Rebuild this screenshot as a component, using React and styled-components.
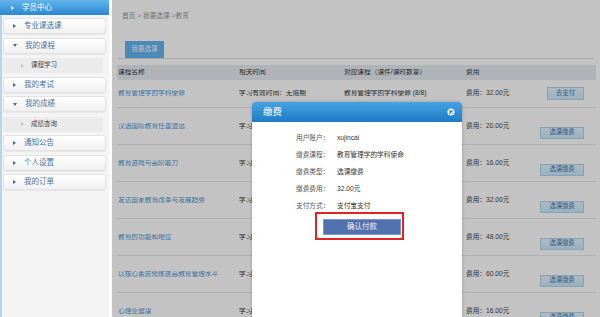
import React from 'react'
import styled, { createGlobalStyle } from 'styled-components'

const GlobalStyle = createGlobalStyle`
  html, body {
    margin: 0;
    padding: 0;
    background: #ffffff;
    font-family: "Liberation Sans", "Noto Sans CJK SC", sans-serif;
  }
  * {
    box-sizing: border-box;
  }
`

const Page = styled.div`
  display: flex;
  width: 600px;
  height: 317px;
  overflow: hidden;
`

const Sidebar = styled.div`
  width: 109px;
  flex-shrink: 0;
  display: flex;
  flex-direction: column;
  background: #f4f4f4;
`

const SideHeader = styled.div`
  height: 15px;
  display: flex;
  align-items: center;
  gap: 8px;
  padding-left: 11px;
  background: linear-gradient(#62b5ec, #2b87d2);
  color: #ffffff;
  font-size: 7.5px;
  line-height: 1;
`

const SideBody = styled.div`
  flex: 1;
  border-left: 2px solid #b5d5ee;
  padding: 3px 3px 0 1px;
`

const Arrow = styled.span`
  width: 0;
  height: 0;
  flex-shrink: 0;
  border-style: solid;
  ${p => p.$down
    ? `border-width: 3px 2.5px 0 2.5px; border-color: ${p.$color} transparent transparent transparent;`
    : `border-width: 2.5px 0 2.5px 3px; border-color: transparent transparent transparent ${p.$color};`}
`

const SideItem = styled.div`
  height: 16px;
  margin-top: ${p => (p.$first ? '0' : '3.5px')};
  display: flex;
  align-items: center;
  gap: 8px;
  padding-left: 9px;
  background: linear-gradient(#ffffff, #f0f0f0);
  border: 1px solid #e2e2e2;
  border-radius: 3px;
  box-shadow: 0 1px 1px rgba(0, 0, 0, 0.06);
  color: #4573a2;
  font-size: 7.5px;
  line-height: 1;
`

const SubItem = styled.div`
  height: 15px;
  margin: 4.5px 3px 0 0;
  display: flex;
  align-items: center;
  gap: 7px;
  padding-left: 18px;
  background: #ebebeb;
  border-radius: 2px;
  color: #444444;
  font-size: 6.5px;
  line-height: 1;
`

const Gutter = styled.div`
  width: 3px;
  flex-shrink: 0;
  background: #fbfbfb;
`

const Content = styled.div`
  flex: 1;
  position: relative;
  background: #ffffff;
  padding: 0 4px 0 5px;
`

const Crumbs = styled.div`
  height: 32px;
  display: flex;
  align-items: center;
  padding-left: 5px;
  color: #999999;
  font-size: 6.7px;
  line-height: 1;
`

const TabBar = styled.div`
  margin: 9px 3px 0 1px;
  padding-left: 7px;
  border-bottom: 1px solid #dcdcdc;
  display: flex;
`

const Tab = styled.div`
  width: 39px;
  height: 17px;
  display: flex;
  align-items: center;
  justify-content: center;
  background: #62b5f0;
  color: #eef7ff;
  font-size: 6.5px;
  line-height: 1;
`

const Table = styled.div`
  margin-top: 6px;
`

const Row = styled.div`
  display: grid;
  grid-template-columns: 121px 105px 122px 1fr;
  align-items: center;
  height: ${p => (p.$head ? '15px' : p.$short ? '28px' : '37px')};
  background: ${p => (p.$head ? '#e6ebf0' : 'transparent')};
  border-bottom: ${p => (p.$head ? 'none' : '1px solid #e6e6e6')};
  color: #333333;
  font-size: 6.7px;
  line-height: 1;
  padding-left: 1px;
`

const Cell = styled.div`
  white-space: nowrap;
  overflow: hidden;
  padding-right: 6px;
`

const CourseLink = styled(Cell)`
  color: #5096d2;
`

const FeeCell = styled.div`
  display: flex;
  align-items: center;
  justify-content: space-between;
  padding-right: 12px;
  color: #444444;
`

const PayButton = styled.div`
  width: ${p => (p.$wide ? '44px' : '37px')};
  height: ${p => (p.$wide ? '12px' : '13px')};
  margin-top: ${p => (p.$drop ? '13px' : '0')};
  display: flex;
  align-items: center;
  justify-content: center;
  background: linear-gradient(#e4f4fe, #cbe8fa);
  border: 1px solid #b0d6ee;
  color: #3477b4;
  font-size: 6.3px;
  line-height: 1;
`

const Shade = styled.div`
  position: absolute;
  inset: 0;
  background: rgba(0, 0, 0, 0.235);
`

const Dialog = styled.div`
  position: absolute;
  left: 140px;
  top: 102px;
  width: 210px;
  height: 240px;
  display: flex;
  flex-direction: column;
  background: #ffffff;
  border-radius: 4px 4px 0 0;
  box-shadow: 0 0 3px rgba(0, 0, 0, 0.25);
`

const DialogTitle = styled.div`
  height: 20px;
  display: flex;
  align-items: center;
  justify-content: space-between;
  padding: 0 7px 0 11px;
  background: linear-gradient(#45a3e2, #1e7bc7);
  border-radius: 4px 4px 0 0;
  color: #ffffff;
  font-size: 9.5px;
  line-height: 1;
`

const DialogBody = styled.div`
  display: flex;
  flex-direction: column;
  padding: 8px 0 0 44px;
`

const Field = styled.div`
  height: 17px;
  display: flex;
  align-items: center;
  font-size: 6.7px;
  line-height: 1;
`

const FieldLabel = styled.span`
  width: 41px;
  color: #555555;
`

const FieldValue = styled.span`
  color: #333333;
`

const Highlight = styled.div`
  align-self: flex-start;
  margin: -3px 0 0 19px;
  padding: 5px 1px 3px 6px;
  border: 2px solid #e3231f;
`

const ConfirmButton = styled.div`
  width: 78px;
  height: 16px;
  display: flex;
  align-items: center;
  justify-content: center;
  background: #5070ae;
  border: 1px solid #7e96c8;
  color: #f2f4fa;
  font-size: 7.5px;
  line-height: 1;
`

const CloseIcon = () => (
  <svg width="8" height="8" viewBox="0 0 8 8">
    <circle cx="4" cy="4" r="3.6" fill="#f4f8fc" />
    <path d="M2.6 2.6 L5.4 5.4 M5.4 2.6 L2.6 5.4" stroke="#1f6fb5" strokeWidth="1.1" strokeLinecap="round" />
  </svg>
)

const menu = [
  { label: '专业课选课' },
  { label: '我的课程', open: true, sub: '课程学习' },
  { label: '我的考试' },
  { label: '我的成绩', open: true, sub: '成绩查询' },
  { label: '通知公告' },
  { label: '个人设置' },
  { label: '我的订单' },
]

const courses = [
  { name: '教育管理学的学科使命', course: '教育管理学的学科使命 (8/8)', fee: '32.00', action: '去支付' },
  { name: '汉语国际教育任重道远', course: '汉语国际教育任重道远 (6/6)', fee: '20.00', action: '选课缴费' },
  { name: '教育游戏与高阶能力', course: '教育游戏与高阶能力 (5/5)', fee: '16.00', action: '选课缴费' },
  { name: '发达国家教育改革与发展趋势', course: '发达国家教育改革与发展趋势 (8/8)', fee: '32.00', action: '选课缴费' },
  { name: '教育的功能和地位', course: '教育的功能和地位 (12/12)', fee: '48.00', action: '选课缴费' },
  { name: '以核心素质修炼提高教育管理水平', course: '以核心素质修炼提高教育管理水平', fee: '60.00', action: '选课缴费' },
  { name: '心理亚健康', course: '心理亚健康 (4/4)', fee: '16.00', action: '选课缴费' },
]

const payInfo = [
  ['用户账户：', 'xujincai'],
  ['缴费课程：', '教育管理学的学科使命'],
  ['缴费类型：', '选课缴费'],
  ['缴费费用：', '32.00元'],
  ['支付方式：', '支付宝支付'],
]

export default function App() {
  return (
    <>
      <GlobalStyle />
      <Page>
        <Sidebar>
          <SideHeader>
            <Arrow $color="#ffffff" />
            学员中心
          </SideHeader>
          <SideBody>
            {menu.map((m, i) => (
              <React.Fragment key={m.label}>
                <SideItem $first={i === 0}>
                  <Arrow $down={m.open} $color="#2b6db0" />
                  {m.label}
                </SideItem>
                {m.sub && (
                  <SubItem>
                    <Arrow $color="#c4c4c4" />
                    {m.sub}
                  </SubItem>
                )}
              </React.Fragment>
            ))}
          </SideBody>
        </Sidebar>
        <Gutter />
        <Content>
          <Crumbs>首页 &gt; 我要选课 &gt;教育</Crumbs>
          <TabBar>
            <Tab>我要选课</Tab>
          </TabBar>
          <Table>
            <Row $head>
              <Cell>课程名称</Cell>
              <Cell>相关时间</Cell>
              <Cell>对应课程（课件/课时数量）</Cell>
              <Cell>费用</Cell>
            </Row>
            {courses.map((c, i) => (
              <Row key={c.name} $short={i === 0}>
                <CourseLink>{c.name}</CourseLink>
                <Cell>学习有效时间：无限期</Cell>
                <Cell>{c.course}</Cell>
                <FeeCell>
                  <span>费用：{c.fee}元</span>
                  <PayButton $wide={i > 0} $drop={i > 0}>{c.action}</PayButton>
                </FeeCell>
              </Row>
            ))}
          </Table>
          <Shade />
          <Dialog>
            <DialogTitle>
              缴费
              <CloseIcon />
            </DialogTitle>
            <DialogBody>
              {payInfo.map(([k, v]) => (
                <Field key={k}>
                  <FieldLabel>{k}</FieldLabel>
                  <FieldValue>{v}</FieldValue>
                </Field>
              ))}
              <Highlight>
                <ConfirmButton>确认付款</ConfirmButton>
              </Highlight>
            </DialogBody>
          </Dialog>
        </Content>
      </Page>
    </>
  )
}
